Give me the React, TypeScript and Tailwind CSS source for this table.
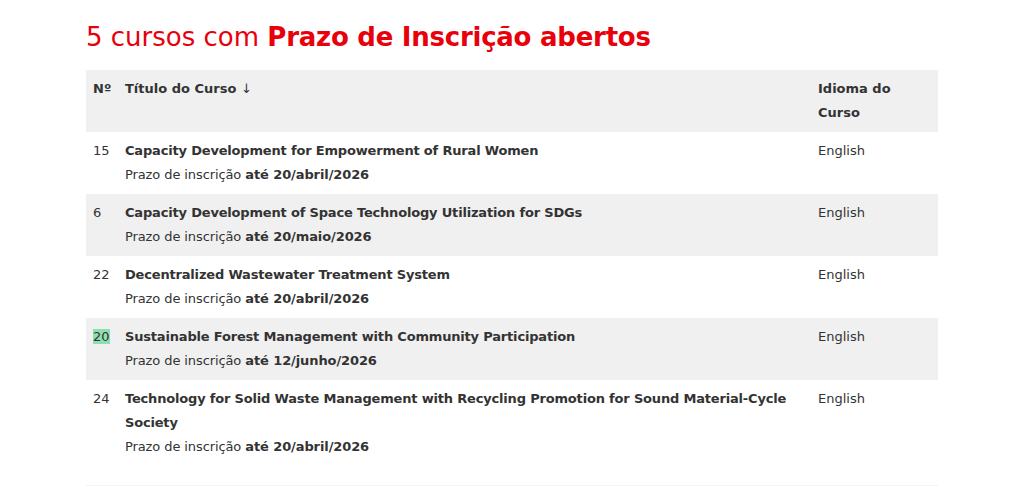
import React from "react";

const rows = [
  { n: "15", t: "Capacity Development for Empowerment of Rural Women", d: "20/abril/2026", bg: "bg-white" },
  { n: "6", t: "Capacity Development of Space Technology Utilization for SDGs", d: "20/maio/2026", bg: "bg-[#f0f0f0]" },
  { n: "22", t: "Decentralized Wastewater Treatment System", d: "20/abril/2026", bg: "bg-white" },
  { n: "20", t: "Sustainable Forest Management with Community Participation", d: "12/junho/2026", bg: "bg-[#f0f0f0]", hl: true },
  { n: "24", t: "Technology for Solid Waste Management with Recycling Promotion for Sound Material-Cycle Society", d: "20/abril/2026", bg: "bg-white" },
];

export default function App() {
  return (
    <div className="w-[1024px] h-[493px] bg-white overflow-hidden text-[#333] font-['DejaVu_Sans',sans-serif]">
      <div className="ml-[86px] w-[852px] pt-[19px]">
        <h1 className="text-[26px] leading-[36px] text-[#e8000b] mb-[15px]">
          5 cursos com <b className="tracking-[-0.25px]">Prazo de Inscrição abertos</b>
        </h1>
        <div className="text-[13px] leading-[24px]">
          <div className="flex bg-[#f0f0f0] py-[7px] font-bold">
            <div className="w-[39px] pl-[7px] shrink-0">Nº</div>
            <div className="flex-1">Título do Curso <span className="font-normal">↓</span></div>
            <div className="w-[120px] shrink-0">Idioma do<br />Curso</div>
          </div>
          {rows.map((r) => (
            <div key={r.n} className={`flex py-[7px] ${r.bg}`}>
              <div className="w-[39px] pl-[7px] shrink-0">
                {r.hl ? <span className="bg-[#8fe0b0]">{r.n}</span> : r.n}
              </div>
              <div className="flex-1 pr-[8px]">
                <div className="font-bold tracking-[-0.18px]">{r.t}</div>
                <div className="tracking-[-0.1px]">Prazo de inscrição <b>até {r.d}</b></div>
              </div>
              <div className="w-[120px] shrink-0">English</div>
            </div>
          ))}
          <div className="h-[20px] border-b border-[#f3f3f3]" />
        </div>
      </div>
    </div>
  );
}
